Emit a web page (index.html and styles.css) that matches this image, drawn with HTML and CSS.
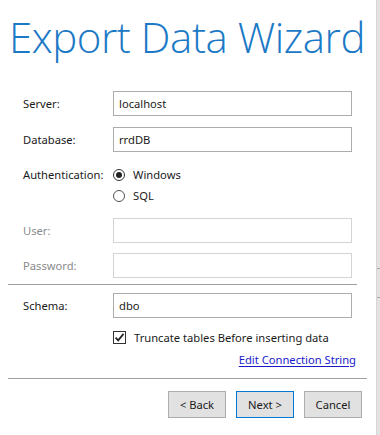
FILE: index.html
```html
<!DOCTYPE html>
<html>
<head>
<meta charset="utf-8">
<link rel="stylesheet" href="styles.css">
</head>
<body>
<div class="window">
  <div class="main">
    <h1 class="title">Export Data Wizard</h1>
    <div class="form">
      <div class="row"><label class="lbl">Server:</label><div class="input">localhost</div></div>
      <div class="row r2"><label class="lbl">Database:</label><div class="input">rrdDB</div></div>
      <div class="row auth">
        <label class="lbl">Authentication:</label>
        <div class="radios">
          <div class="radio"><span class="rb on"></span>Windows</div>
          <div class="radio"><span class="rb"></span>SQL</div>
        </div>
      </div>
      <div class="row dis r4"><label class="lbl">User:</label><div class="input"></div></div>
      <div class="row dis r5"><label class="lbl">Password:</label><div class="input"></div></div>
      <div class="sep1"></div>
      <div class="row r6"><label class="lbl">Schema:</label><div class="input">dbo</div></div>
      <div class="check">
        <span class="cb"><svg width="11" height="11" viewBox="0 0 11 11"><path d="M1.6 5.6 L4.2 8.4 L9.5 1.9" fill="none" stroke="#222" stroke-width="1.7"/></svg></span>
        Truncate tables Before inserting data
      </div>
      <div class="linkrow"><a class="link" href="#">Edit Connection String</a></div>
    </div>
    <div class="sep2"></div>
    <div class="buttons">
      <button class="btn">&lt; Back</button>
      <button class="btn def">Next &gt;</button>
      <button class="btn">Cancel</button>
    </div>
  </div>
  <div class="edge">
    <div class="edge-line l1"></div>
    <div class="edge-line l2"></div>
  </div>
</div>
</body>
</html>
```
FILE: styles.css
```css
html, body {
  margin: 0;
  padding: 0;
  background: #fff;
}
body {
  font-family: "Noto Sans", "Open Sans", sans-serif;
  font-size: 11.2px;
  color: #1a1a1a;
}
.window {
  display: flex;
  width: 380px;
  height: 435px;
  overflow: hidden;
}
.main {
  width: 376px;
  flex: none;
}
.edge {
  width: 4px;
  background: #e3e3e3;
  border-left: 1px solid #d6d6d6;
  box-sizing: border-box;
  display: flex;
  flex-direction: column;
}
.edge-line { height: 1px; background: #a9a9a9; }
.l1 { margin-top: 268px; }
.l2 { margin-top: 28px; }
.title {
  margin: 0;
  padding: 8px 0 0 9px;
  height: 60px;
  box-sizing: border-box;
  font-family: "Open Sans", sans-serif;
  font-weight: 300;
  font-size: 42px;
  line-height: 58px;
  color: #1c79c6;
  letter-spacing: -0.45px;
  white-space: nowrap;
}
.form {
  padding: 31px 0 0 23px;
}
.row {
  display: flex;
  align-items: center;
  height: 25px;
}
.r2 { margin-top: 11px; }
.r4 { margin-top: 13px; }
.r5 { margin-top: 10px; }
.r6 { margin-top: 0; }
.lbl {
  width: 90px;
  flex: none;
}
.input {
  width: 239px;
  height: 25px;
  box-sizing: border-box;
  border: 1px solid #acacac;
  padding: 0 5px;
  line-height: 23px;
}
.dis .lbl { color: #8a8a8a; }
.dis .input { border-color: #d4d4d4; }
.auth {
  align-items: flex-start;
  height: auto;
  margin-top: 14px;
}
.auth .lbl { line-height: 18px; }
.radios { display: flex; flex-direction: column; gap: 3px; }
.radio {
  display: flex;
  align-items: center;
  height: 18px;
  line-height: 18px;
  gap: 8px;
}
.rb {
  width: 12px;
  height: 12px;
  border: 1px solid #333;
  border-radius: 50%;
  box-sizing: border-box;
  display: flex;
  align-items: center;
  justify-content: center;
}
.rb.on::after {
  content: "";
  width: 6px;
  height: 6px;
  border-radius: 50%;
  background: #222;
}
.radio:nth-child(2) .rb { border-color: #555; }
.sep1 {
  height: 1px;
  background: #a0a0a0;
  width: 349px;
  margin: 6px 0 8px -15px;
}
.check {
  display: flex;
  align-items: center;
  gap: 8px;
  margin: 9px 0 0 90px;
  height: 20px;
}
.cb {
  width: 13px;
  height: 13px;
  border: 1px solid #333;
  box-sizing: border-box;
  display: flex;
  align-items: center;
  justify-content: center;
}
.linkrow {
  display: flex;
  justify-content: flex-end;
  width: 333px;
  margin-top: 2px;
  height: 20px;
  align-items: center;
}
.link {
  color: #1a1acc;
  text-decoration: underline;
  text-underline-offset: 2px;
}
.sep2 {
  height: 1px;
  background: #a0a0a0;
  width: 359px;
  margin: 9px 0 0 8px;
}
.buttons {
  display: flex;
  justify-content: flex-end;
  gap: 10px;
  padding: 12px 14px 0 0;
}
.btn {
  width: 58px;
  height: 27px;
  font-family: inherit;
  font-size: 11.2px;
  color: #1a1a1a;
  background: #e1e1e1;
  border: 1px solid #adadad;
  padding: 0;
}
.btn.def {
  border-color: #0078d7;
}
```
